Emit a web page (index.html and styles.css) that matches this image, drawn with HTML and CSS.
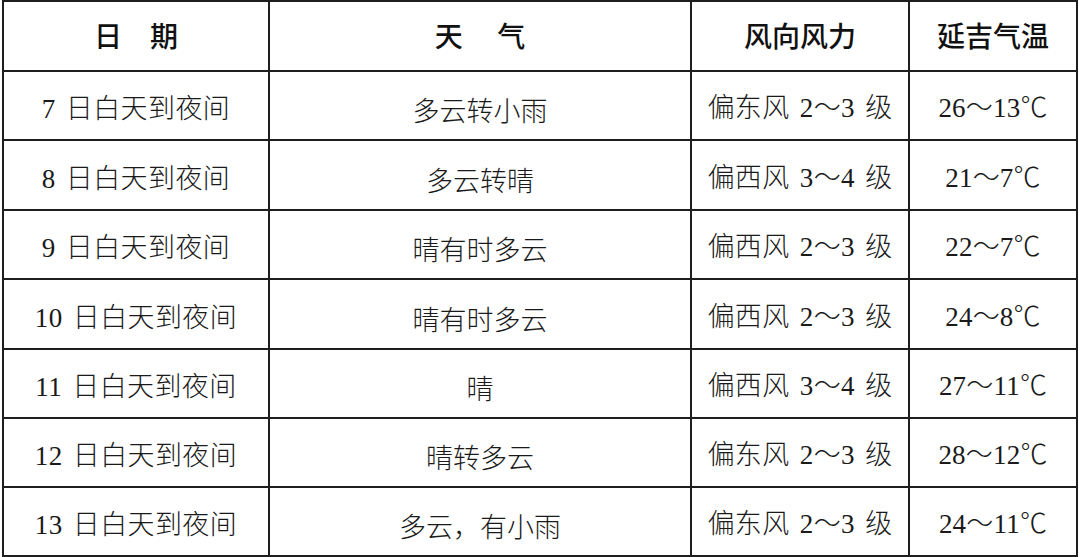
FILE: index.html
```html
<!DOCTYPE html>
<html lang="zh-CN">
<head>
<meta charset="utf-8">
<title>延吉天气预报</title>
<link rel="stylesheet" href="styles.css">
</head>
<body>
<div class="table">
  <div class="cell head">日　期</div>
  <div class="cell head">天　 气</div>
  <div class="cell head">风向风力</div>
  <div class="cell head">延吉气温</div>

  <div class="cell date">7 日白天到夜间</div>
  <div class="cell wx">多云转小雨</div>
  <div class="cell wind">偏东风 2～3 级</div>
  <div class="cell temp">26～13℃</div>

  <div class="cell date">8 日白天到夜间</div>
  <div class="cell wx">多云转晴</div>
  <div class="cell wind">偏西风 3～4 级</div>
  <div class="cell temp">21～7℃</div>

  <div class="cell date">9 日白天到夜间</div>
  <div class="cell wx">晴有时多云</div>
  <div class="cell wind">偏西风 2～3 级</div>
  <div class="cell temp">22～7℃</div>

  <div class="cell date">10 日白天到夜间</div>
  <div class="cell wx">晴有时多云</div>
  <div class="cell wind">偏西风 2～3 级</div>
  <div class="cell temp">24～8℃</div>

  <div class="cell date">11 日白天到夜间</div>
  <div class="cell wx">晴</div>
  <div class="cell wind">偏西风 3～4 级</div>
  <div class="cell temp">27～11℃</div>

  <div class="cell date">12 日白天到夜间</div>
  <div class="cell wx">晴转多云</div>
  <div class="cell wind">偏东风 2～3 级</div>
  <div class="cell temp">28～12℃</div>

  <div class="cell date">13 日白天到夜间</div>
  <div class="cell wx">多云，有小雨</div>
  <div class="cell wind">偏东风 2～3 级</div>
  <div class="cell temp">24～11℃</div>
</div>
</body>
</html>
```

FILE: styles.css
```css
html, body {
  margin: 0;
  padding: 0;
  background: #ffffff;
}

body {
  width: 1080px;
  height: 557px;
  overflow: hidden;
}

.table {
  margin-left: 2px;
  width: 1076px;
  box-sizing: border-box;
  padding: 2px;
  background: #1e1e1e;
  display: grid;
  grid-template-columns: 264px 420px 216px 166px;
  grid-template-rows: 68px 67px 68px 67px 68px 67px 67px 67px;
  gap: 2px;
}

.cell {
  background: #ffffff;
  display: flex;
  align-items: center;
  justify-content: center;
  color: #1a1a1a;
  font-family: "Liberation Serif", "Noto Sans CJK SC", serif;
  font-size: 27px;
  font-weight: 300;
  white-space: nowrap;
  box-sizing: border-box;
}

.head {
  font-family: "Noto Sans CJK SC", sans-serif;
  font-size: 28px;
  font-weight: 500;
  color: #111111;
  padding-bottom: 2px;
}

.date {
  padding-top: 2px;
  word-spacing: 3px;
  letter-spacing: 0.4px;
}

.wx {
  padding-top: 8px;
}

.wind {
  word-spacing: 3px;
  letter-spacing: 0.4px;
}

.temp {
  letter-spacing: 0.2px;
}
```
